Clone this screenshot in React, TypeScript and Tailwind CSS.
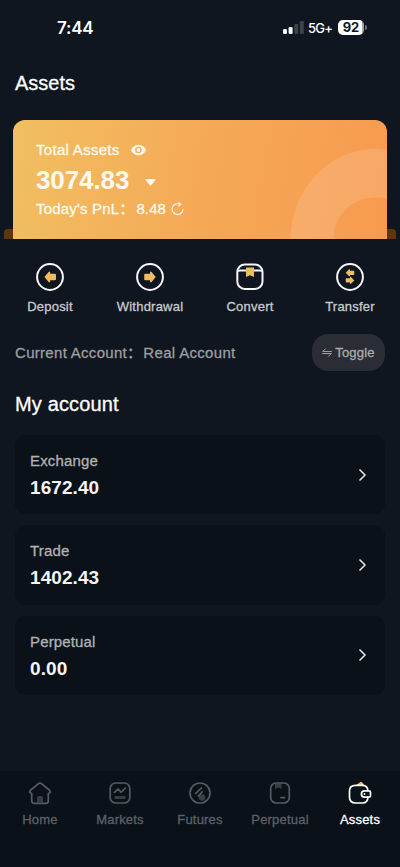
import type { ReactNode } from 'react';

const medium = '[-webkit-text-stroke:0.3px_currentColor]';

function StatusBar() {
  return (
    <header className="flex h-[54px] items-center justify-between pl-[57px] pr-[33px]">
      <span className="mt-px font-['Inter'] text-[17px] font-semibold leading-5 tracking-[-0.25px]">7:44</span>
      <div className="flex items-center">
        <svg width="21" height="13" viewBox="0 0 21 13" fill="#fff">
          <rect x="0" y="8" width="4" height="5" rx="1.2" />
          <rect x="5.6" y="6" width="4" height="7" rx="1.2" />
          <rect x="11.2" y="3" width="4" height="10" rx="1.2" fill="#3d434b" />
          <rect x="16.8" y="0" width="4" height="13" rx="1.2" fill="#3d434b" />
        </svg>
        <span className="ml-[4px] mt-px w-[25px] whitespace-nowrap font-['Inter'] text-[13px] font-medium leading-4 tracking-[-0.7px]">5G+</span>
        <div className="ml-[5px] flex h-[15px] w-[26px] items-center justify-center rounded-[5px] bg-[linear-gradient(90deg,#fff_92%,#a0a3a7_92%)] font-['Inter'] text-[13px] font-bold leading-none text-[#10161f]">
          92
        </div>
        <div className="ml-px h-[5px] w-[2px] rounded-r-full bg-[#6b7077]" />
      </div>
    </header>
  );
}

function BalanceCard() {
  return (
    <section className="relative mt-[20px] px-[13px]">
      <div className="absolute bottom-0 left-[4px] right-[4px] h-[10px] rounded-t-[4px] bg-[#5f3510]" />
      <div className="relative h-[119px] overflow-hidden rounded-t-[12px] bg-[linear-gradient(100deg,#f1bf62_0%,#f5a956_50%,#f79a50_100%)] pl-[23px] pt-[20px] text-[#fffaf0]">
        <svg className="absolute right-0 top-0" width="110" height="119" viewBox="0 0 110 119">
          <path
            fillRule="evenodd"
            fill="#fff"
            fillOpacity=".13"
            d="M13.5 119C15 70 50 29 99 29c4 0 8 .3 11 .8v48.800c-3-.7-7-1.100-11-1.100C74 77.500 57 96 56.500 119z"
          />
        </svg>
        <div className="flex h-[20px] items-center">
          <span className={`text-[15px] tracking-[0.3px] ${medium}`}>Total Assets</span>
          <svg className="ml-[11px]" width="15" height="12" viewBox="0 0 15 12">
            <path fill="currentColor" fillRule="evenodd" d="M7.500.700C4 .700 1.300 2.800 0 6c1.300 3.200 4 5.300 7.500 5.300S13.700 9.200 15 6C13.700 2.800 11 .700 7.500.700zm0 2a3.300 3.300 0 1 1 0 6.600 3.300 3.300 0 0 1 0-6.600z" />
            <circle cx="7.500" cy="6" r="1.900" fill="currentColor" />
          </svg>
        </div>
        <div className="flex h-[40px] items-center">
          <span className="mt-px text-[26px] font-bold tracking-[-0.1px]">3074.83</span>
          <svg className="ml-[16px] mt-[6px]" width="11" height="8" viewBox="0 0 11 8">
            <path fill="currentColor" stroke="currentColor" strokeLinejoin="round" d="M.700.700h9.600L5.500 6.500z" />
          </svg>
        </div>
        <div className="flex h-[18px] items-center">
          <span className={`text-[15px] tracking-[0.18px] ${medium}`}>Today's PnL：</span>
          <span className={`ml-[2px] text-[15px] tracking-[0.1px] ${medium}`}>8.48</span>
          <svg className="ml-[5px]" width="13" height="14" viewBox="0 0 13 14" fill="none" stroke="currentColor" strokeWidth="1.200">
            <path d="M9.300 2.500A5.400 5.400 0 1 0 11.900 7" />
            <path d="M7.700.500l2 2-2.300 1.800" />
          </svg>
        </div>
      </div>
    </section>
  );
}

const ARROW_LEFT = 'M-5.500 0L-1.500-4.600Q0-5.800 0-3.800V-3H4.500Q5.500-3 5.500-2V2Q5.500 3 4.500 3H0V3.800Q0 5.800-1.500 4.600Z';

function ActionIcon({ kind }: { kind: string }) {
  return (
    <svg width="30" height="30" viewBox="0 0 30 30" fill="none">
      {kind !== 'convert' && <circle cx="15" cy="15" r="12.900" stroke="#f7f7f9" strokeWidth="2" />}
      {kind === 'deposit' && <path d={ARROW_LEFT} transform="translate(15.200 15) scale(1.050 1.080)" fill="#efbd5f" />}
      {kind === 'withdrawal' && <path d={ARROW_LEFT} transform="translate(15 15) scale(-1.050 1.080)" fill="#efbd5f" />}
      {kind === 'transfer' && (
        <g fill="#efbd5f">
          <path d={ARROW_LEFT} transform="translate(15 10.800) scale(.78 .7)" />
          <path d={ARROW_LEFT} transform="translate(15 18.400) scale(-.78 .7)" />
        </g>
      )}
      {kind === 'convert' && (
        <>
          <rect x="2.300" y="2.500" width="25.200" height="24.500" rx="7.500" stroke="#f7f7f9" strokeWidth="2" />
          <path d="M3 9.200Q4 8.500 5 8.500H25Q26 8.500 27 9.200" stroke="#f7f7f9" strokeWidth="2" />
          <path d="M11 5.500h8v9.500l-4-1.700-4 1.700z" fill="#efbd5f" />
        </>
      )}
    </svg>
  );
}

const actions = [
  ['deposit', 'Deposit'],
  ['withdrawal', 'Withdrawal'],
  ['convert', 'Convert'],
  ['transfer', 'Transfer'],
];

function NavIcon({ kind }: { kind: string }) {
  const c = '#555b63';
  const icons: Record<string, ReactNode> = {
    Home: (
      <>
        <path d="M10.500 2.700Q12 1.500 13.500 2.700L21.800 9.500Q23 11 21.300 12L20.300 12.500V20Q20.300 22.300 18 22.300H6Q3.700 22.300 3.700 20V12.500L2.700 12Q1 11 2.200 9.500Z" stroke={c} />
        <path d="M9 22V16.500Q9 15 10.500 15h3Q15 15 15 16.500V22z" fill="#383c43" />
      </>
    ),
    Markets: (
      <>
        <rect x="2.200" y="2" width="19.600" height="20" rx="5.500" stroke={c} />
        <path d="M6.500 11.300L10 8l3 3.300L17.500 7" stroke={c} />
        <rect x="6.500" y="15" width="11" height="3" rx=".700" fill="#383c43" />
      </>
    ),
    Futures: (
      <>
        <circle cx="14" cy="16.500" r="3.300" fill="#383c43" />
        <circle cx="12" cy="12" r="10" stroke={c} />
        <path d="M7.800 12.300L13.300 7M10.300 15L14.300 10.800" stroke={c} />
      </>
    ),
    Perpetual: (
      <>
        <rect x="2.700" y="2" width="18.600" height="20" rx="5.500" stroke={c} />
        <path d="M7 3h6.500v5l-3.200-1.500L7 8z" fill="#383c43" />
        <path d="M13 16.700h3.500" stroke={c} />
      </>
    ),
    Assets: (
      <>
        <path d="M8.500 4L12 1.200Q13 .400 14 1.200L16.500 4z" fill="#efbd5f" />
        <path d="M20 9.700Q19.500 4.300 14.500 4.300H7.500Q1.500 4.300 1.500 10V16Q1.500 22 7.500 22H14.500Q19.700 22 20 16" stroke="#fff" />
        <path d="M21 9.900H16.500a3.100 3.100 0 0 0 0 6.200H21Q22.500 16.100 22.500 14.500V11.500Q22.500 9.900 21 9.900z" stroke="#fff" />
        <circle cx="16.500" cy="13" r=".900" fill="#fff" />
      </>
    ),
  };
  return (
    <svg width="24" height="24" viewBox="0 0 24 24" fill="none" strokeWidth="1.700" strokeLinecap="round" strokeLinejoin="round">
      {icons[kind]}
    </svg>
  );
}

const accounts = [
  ['Exchange', '1672.40'],
  ['Trade', '1402.43'],
  ['Perpetual', '0.00'],
];

const tabs = ['Home', 'Markets', 'Futures', 'Perpetual', 'Assets'];

export default function App() {
  return (
    <div className="flex h-[867px] w-[400px] flex-col overflow-hidden bg-[#10161f] font-['Liberation_Sans','Noto_Sans_CJK_SC',sans-serif] text-white">
      <StatusBar />
      <h1 className={`mt-[16px] pl-[15px] text-[20px] leading-[26px] ${medium}`}>Assets</h1>
      <div className="mt-[4px]">
        <BalanceCard />
      </div>

      <nav className="mt-[23px] grid h-[54px] grid-cols-4">
        {actions.map(([kind, label]) => (
          <div key={kind} className="flex flex-col items-center">
            <ActionIcon kind={kind} />
            <span className={`mt-[6px] text-[13px] leading-[18px] tracking-[0.22px] text-[#c8cacd] ${medium}`}>{label}</span>
          </div>
        ))}
      </nav>

      <div className="mt-[18px] flex h-[37px] items-center justify-between px-[15px]">
        <div className={`mt-px flex text-[15px] text-[#9c9ea2] ${medium}`}>
          <span className="tracking-[0.3px]">Current Account：</span>
          <span className="ml-[1px] tracking-[0.32px]">Real Account</span>
        </div>
        <button className="flex h-[37px] w-[73px] items-center justify-center gap-[3px] rounded-[16px] bg-[#2a2d35] text-[#aaacb0]">
          <svg width="10" height="9" viewBox="0 0 10 9" fill="none" stroke="currentColor" strokeWidth=".900">
            <path d="M9.800 3.500H.700L3.700.500M.200 5.500h9.100L6.300 8.500" />
          </svg>
          <span className={`text-[13px] tracking-[0.2px] ${medium}`}>Toggle</span>
        </button>
      </div>

      <h2 className={`mt-[20px] pl-[15px] text-[20px] leading-[26px] tracking-[0.15px] ${medium}`}>My account</h2>

      <main className="mt-[18px] flex flex-col gap-[11px] px-[15px]">
        {accounts.map(([name, value]) => (
          <div key={name} className="flex h-[79.300px] items-center justify-between rounded-[11px] bg-[#0b1118] pl-[15px] pr-[18px]">
            <div className="flex flex-col pt-[4px]">
              <span className={`text-[15px] leading-[20px] tracking-[0.15px] text-[#b0b2b5] ${medium}`}>{name}</span>
              <span className="mt-[3px] text-[19px] font-bold leading-[28px] tracking-[0.08px] text-[#f5f5f5]">{value}</span>
            </div>
            <svg width="9" height="14" viewBox="0 0 9 14" fill="none" stroke="#e8e8e8" strokeWidth="1.500">
              <path d="M1.500 1.500L7 7l-5.500 5.500" />
            </svg>
          </div>
        ))}
      </main>

      <footer className="mt-auto grid h-[96px] grid-cols-5 bg-[#0b1118] pt-[10px]">
        {tabs.map((tab) => (
          <div key={tab} className={`flex flex-col items-center ${tab === 'Assets' ? 'text-white' : 'text-[#5c6169]'}`}>
            <NavIcon kind={tab} />
            <span className={`mt-[6px] text-[13px] leading-[18px] tracking-[0.2px] ${medium}`}>{tab}</span>
          </div>
        ))}
      </footer>
    </div>
  );
}
